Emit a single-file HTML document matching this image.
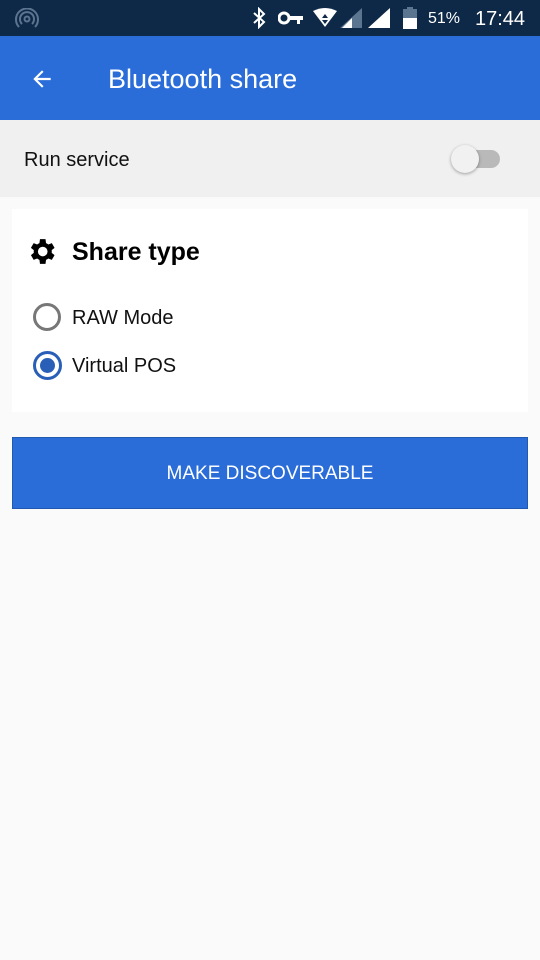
<!DOCTYPE html>
<html><head><style>
body{margin:0;width:540px;height:960px;background:#fafafa;font-family:"Liberation Sans",sans-serif;position:relative;overflow:hidden}
.a{position:absolute}
</style></head><body>
<div class="a" style="left:0;top:0;width:540px;height:36px;background:#0e2947"></div>
<svg class="a" style="left:15px;top:8px" width="24" height="22" viewBox="0 0 24 22"><g fill="none" stroke="#5b7590" stroke-width="2"><circle cx="12" cy="11" r="2.5"/><path d="M7 16a7 7 0 1 1 10 0M4 19a11 11 0 1 1 16 0"/></g></svg>
<svg class="a" style="left:252px;top:7px" width="14" height="22" viewBox="0 0 14 22"><path d="M2 6l10 9-5 5V2l5 5-10 9" fill="none" stroke="#fff" stroke-width="2"/></svg>
<svg class="a" style="left:278px;top:10px" width="26" height="16"><circle cx="6" cy="8" r="5" fill="none" stroke="#fff" stroke-width="3"/><rect x="10" y="6" width="15" height="4" fill="#fff"/><rect x="19" y="8" width="3" height="6" fill="#fff"/></svg>
<svg class="a" style="left:312px;top:8px" width="26" height="20"><path d="M1 3Q13 -3 25 3L13 19Z" fill="#fff"/><path d="M13 6l3 4h-6zM13 16l3-4h-6z" fill="#0e2947"/></svg>
<svg class="a" style="left:340px;top:8px" width="24" height="20"><path d="M22 0V20H0Z" fill="#5b7590"/><path d="M12 10V20H2Z" fill="#fff"/></svg>
<svg class="a" style="left:368px;top:8px" width="24" height="20"><path d="M22 0V20H0Z" fill="#fff"/></svg>
<svg class="a" style="left:403px;top:7px" width="14" height="22"><rect x="4" y="0" width="6" height="3" fill="#5b7590"/><rect x="0" y="2" width="14" height="20" fill="#5b7590"/><rect x="0" y="11" width="14" height="11" fill="#fff"/></svg>
<div class="a" style="left:428px;top:10px;color:#fff;font-size:16px">51%</div>
<div class="a" style="left:475px;top:8px;color:#fff;font-size:20px">17:44</div>
<div class="a" style="left:0;top:36px;width:540px;height:84px;background:#2a6dd9"></div>
<svg class="a" style="left:29px;top:66px" width="26" height="26" viewBox="0 0 24 24"><path d="M20 11H7.8l5.6-5.6L12 4l-8 8 8 8 1.4-1.4L7.8 13H20z" fill="#fff"/></svg>
<div class="a" style="left:108px;top:64px;color:#fff;font-size:27px">Bluetooth share</div>
<div class="a" style="left:0;top:120px;width:540px;height:77px;background:#f0f0f0"></div>
<div class="a" style="left:24px;top:149px;color:#111;font-size:20px">Run service</div>
<div class="a" style="left:454px;top:150px;width:46px;height:18px;border-radius:9px;background:#b9b9b9"></div>
<div class="a" style="left:451px;top:145px;width:28px;height:28px;border-radius:50%;background:#f1f1f1;box-shadow:0 1px 3px rgba(0,0,0,.35)"></div>
<div class="a" style="left:12px;top:209px;width:516px;height:203px;background:#fff"></div>
<svg class="a" style="left:25px;top:235px" width="33" height="33" viewBox="0 0 24 24"><path fill="#000" d="M19.4 13a7.5 7.5 0 0 0 0-2l2.1-1.6-2-3.5-2.5 1a7 7 0 0 0-1.7-1L14.9 3h-4l-.4 2.9a7 7 0 0 0-1.7 1l-2.5-1-2 3.5L6.4 11a7.5 7.5 0 0 0 0 2l-2.1 1.6 2 3.5 2.5-1a7 7 0 0 0 1.7 1l.4 2.9h4l.4-2.9a7 7 0 0 0 1.7-1l2.5 1 2-3.5zM12.9 15.5a3.5 3.5 0 1 1 0-7 3.5 3.5 0 0 1 0 7z"/></svg>
<div class="a" style="left:72px;top:238px;color:#000;font-size:25px;font-weight:bold">Share type</div>
<div class="a" style="left:33px;top:303px;width:28px;height:28px;border:3px solid #777;border-radius:50%;box-sizing:border-box"></div>
<div class="a" style="left:72px;top:307px;color:#111;font-size:20px">RAW Mode</div>
<div class="a" style="left:33px;top:351px;width:29px;height:29px;border:3px solid #2a5fb8;border-radius:50%;box-sizing:border-box"></div>
<div class="a" style="left:40px;top:358px;width:15px;height:15px;background:#2a5fb8;border-radius:50%"></div>
<div class="a" style="left:72px;top:355px;color:#111;font-size:20px">Virtual POS</div>
<div class="a" style="left:12px;top:437px;width:516px;height:72px;background:#2a6dd9;box-sizing:border-box;border:1px solid #2158b0;color:#fff;font-size:19px;display:flex;align-items:center;justify-content:center;padding-top:2px">MAKE DISCOVERABLE</div>
</body></html>
